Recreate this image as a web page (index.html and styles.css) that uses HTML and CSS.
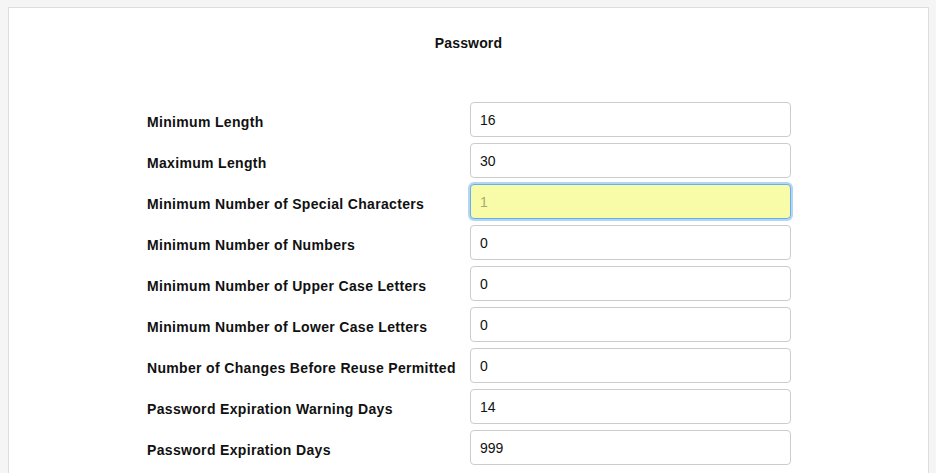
FILE: index.html
```html
<!DOCTYPE html>
<html>
<head>
<meta charset="utf-8">
<link rel="stylesheet" href="styles.css">
</head>
<body>
<div class="panel">
  <h2 class="title">Password</h2>
  <form class="form">
    <div class="row"><label class="label">Minimum Length</label><input class="input" type="text" value="16"></div>
    <div class="row"><label class="label">Maximum Length</label><input class="input" type="text" value="30"></div>
    <div class="row"><label class="label">Minimum Number of Special Characters</label><input class="input focused" type="text" value="1"></div>
    <div class="row"><label class="label">Minimum Number of Numbers</label><input class="input" type="text" value="0"></div>
    <div class="row"><label class="label">Minimum Number of Upper Case Letters</label><input class="input" type="text" value="0"></div>
    <div class="row"><label class="label">Minimum Number of Lower Case Letters</label><input class="input" type="text" value="0"></div>
    <div class="row"><label class="label">Number of Changes Before Reuse Permitted</label><input class="input" type="text" value="0"></div>
    <div class="row"><label class="label">Password Expiration Warning Days</label><input class="input" type="text" value="14"></div>
    <div class="row"><label class="label">Password Expiration Days</label><input class="input" type="text" value="999"></div>
  </form>
</div>
</body>
</html>
```
FILE: styles.css
```css
html, body {
  height: 100%;
}
body {
  margin: 7px 7px 0 8px;
  background: #f5f5f5;
  font-family: "Liberation Sans", Arial, sans-serif;
  color: #111;
  overflow: hidden;
}
.panel {
  background: #fff;
  border: 1px solid #ddd;
  border-bottom: none;
  min-height: 600px;
  padding-top: 25px;
}
.title {
  margin: 0;
  text-align: center;
  font-size: 14px;
  font-weight: bold;
  line-height: 20px;
  letter-spacing: 0.15px;
  color: #111;
}
.form {
  display: flex;
  flex-direction: column;
  gap: 6px;
  margin: 49px 0 0 138px;
}
.row {
  display: flex;
  align-items: flex-start;
}
.label {
  width: 323px;
  padding-top: 10px;
  font-size: 14px;
  font-weight: bold;
  line-height: 20px;
  letter-spacing: 0.33px;
  color: #111;
  white-space: nowrap;
}
.input {
  box-sizing: border-box;
  width: 321px;
  height: 35px;
  margin: 0;
  padding: 0 9px;
  border: 1px solid #ccc;
  border-radius: 4px;
  background: #fff;
  font-family: "Liberation Sans", Arial, sans-serif;
  font-size: 14px;
  color: #111;
  outline: none;
}
.input.focused {
  border-color: #66afe9;
  background: #f8fca9;
  color: #a9aa72;
  box-shadow: 0 0 0 2px #b3d6f5;
}
```
